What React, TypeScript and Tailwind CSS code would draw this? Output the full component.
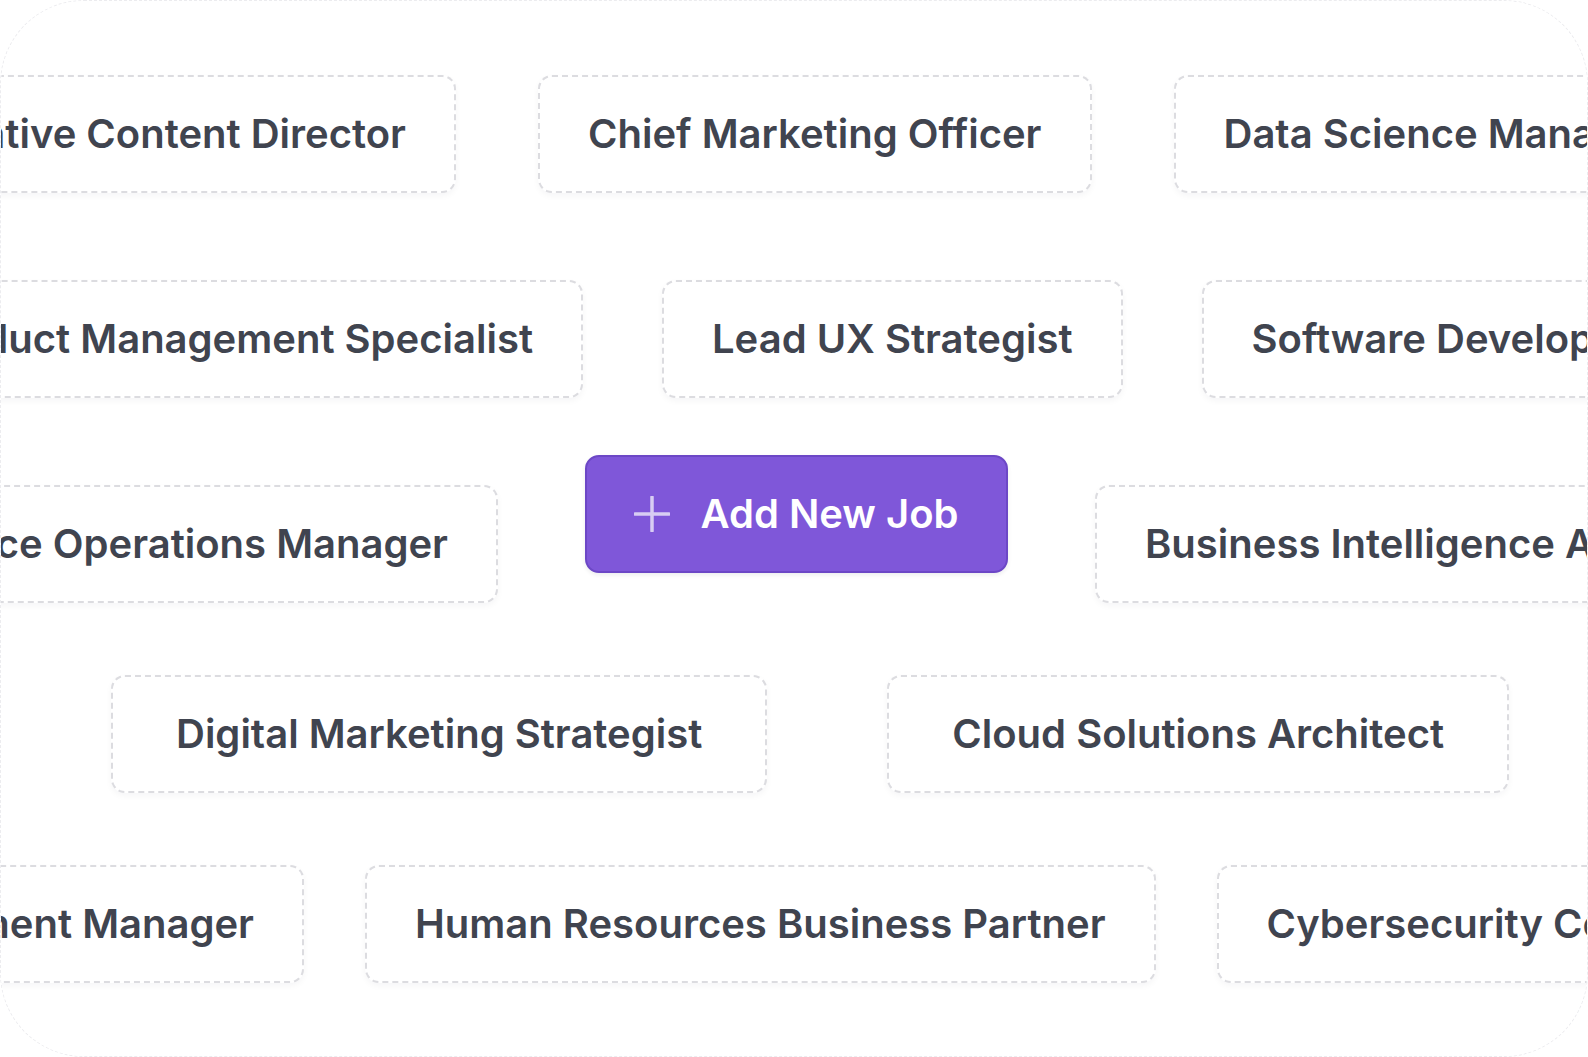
function Chip({ label, wide = false }: { label: string; wide?: boolean }) {
  return (
    <div
      className={`shrink-0 h-[118px] flex items-center rounded-[14px] border-2 border-dashed border-[#dcdce0] bg-white shadow-[0_3px_6px_rgba(16,24,40,0.04)] whitespace-nowrap text-[40px] font-semibold text-[#40444f] ${
        wide ? 'px-[63px]' : 'px-[48px]'
      }`}
    >
      {label}
    </div>
  )
}

function Lead({ width, label }: { width: string; label: string }) {
  return (
    <div className={`shrink-0 flex justify-end ${width}`}>
      <Chip label={label} />
    </div>
  )
}

function PlusIcon() {
  return (
    <svg width="36" height="36" viewBox="0 0 36 36" fill="none" className="shrink-0">
      <path d="M18 1v34M1 18h34" stroke="#d8cdf3" strokeWidth="3.5" strokeLinecap="round" />
    </svg>
  )
}

export default function App() {
  return (
    <div className="w-[1588px] h-[1057px] overflow-hidden bg-white" style={{ fontFamily: 'Inter, "Noto Sans", sans-serif' }}>
      <div className="h-full rounded-[84px] border border-dashed border-[#ececef] overflow-hidden flex flex-col pt-[74px]">
        <div className="flex gap-[82px]">
          <Lead width="w-[455px]" label="Creative Content Director" />
          <Chip label="Chief Marketing Officer" />
          <Chip label="Data Science Manager" />
        </div>

        <div className="flex gap-[79px] mt-[87px]">
          <Lead width="w-[582px]" label="Product Management Specialist" />
          <Chip label="Lead UX Strategist" />
          <Chip label="Software Developer" />
        </div>

        <div className="flex items-start gap-[87px] mt-[87px]">
          <Lead width="w-[497px]" label="Finance Operations Manager" />
          <button className="shrink-0 -mt-[30px] w-[423px] h-[118px] flex items-center justify-center gap-[30px] rounded-[14px] border-2 border-[#6c47c6] bg-[#7f57d9] shadow-[0_2px_4px_rgba(16,24,40,0.08)] text-white text-[40px] font-semibold">
            <PlusIcon />
            <span>Add New Job</span>
          </button>
          <Chip label="Business Intelligence Analyst" />
        </div>

        <div className="flex gap-[120px] mt-[72px] pl-[110px]">
          <Chip label="Digital Marketing Strategist" wide />
          <Chip label="Cloud Solutions Architect" wide />
        </div>

        <div className="flex gap-[61px] mt-[72px]">
          <Lead width="w-[303px]" label="Recruitment Manager" />
          <Chip label="Human Resources Business Partner" />
          <Chip label="Cybersecurity Consultant" />
        </div>
      </div>
    </div>
  )
}
